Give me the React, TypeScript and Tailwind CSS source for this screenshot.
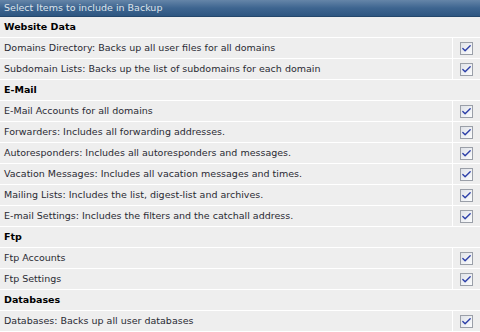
import { Check } from 'lucide-react';

type Row = { label: string; section?: boolean };

const rows: Row[] = [
  { label: 'Website Data', section: true },
  { label: 'Domains Directory: Backs up all user files for all domains' },
  { label: 'Subdomain Lists: Backs up the list of subdomains for each domain' },
  { label: 'E-Mail', section: true },
  { label: 'E-Mail Accounts for all domains' },
  { label: 'Forwarders: Includes all forwarding addresses.' },
  { label: 'Autoresponders: Includes all autoresponders and messages.' },
  { label: 'Vacation Messages: Includes all vacation messages and times.' },
  { label: 'Mailing Lists: Includes the list, digest-list and archives.' },
  { label: 'E-mail Settings: Includes the filters and the catchall address.' },
  { label: 'Ftp', section: true },
  { label: 'Ftp Accounts' },
  { label: 'Ftp Settings' },
  { label: 'Databases', section: true },
  { label: 'Databases: Backs up all user databases' },
];

function Box() {
  return (
    <span className="flex h-[13px] w-[13px] items-center justify-center border border-[#9a9fa8] bg-gradient-to-br from-[#dfe2e8] to-[#fbfcfd]">
      <Check size={11} strokeWidth={3} className="text-[#2c3fa8]" />
    </span>
  );
}

export default function App() {
  return (
    <div className="w-[480px] bg-white text-[9.5px] text-[#2a2a33] font-['DejaVu_Sans',sans-serif]">
      <div className="h-[17px] border-b border-[#24476c] bg-gradient-to-b from-[#6585a8] via-[#3e6590] to-[#2d5681] pl-1 leading-[16px] text-[#dde3ea]">
        Select Items to include in Backup
      </div>
      {rows.map((r) =>
        r.section ? (
          <div key={r.label} className="h-[21px] border-b border-white bg-[#eeeeee] pl-1 font-bold leading-[20px] text-black">
            {r.label}
          </div>
        ) : (
          <div key={r.label} className="flex h-[21px] border-b border-white bg-[#eeeeee]">
            <div className="flex-1 pl-1 leading-[20px]">{r.label}</div>
            <div className="flex w-[28px] items-center justify-center border-l border-white">
              <Box />
            </div>
          </div>
        )
      )}
    </div>
  );
}
